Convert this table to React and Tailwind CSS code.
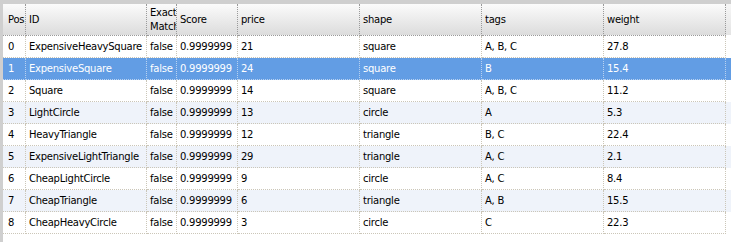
import React from 'react';

const columns = [
    { key: 'pos', label: 'Pos', w: 'w-[23px]', pad: 'pl-[5px]' },
    { key: 'id', label: 'ID', w: 'w-[121px]', pad: 'pl-[3px]' },
    { key: 'exact', label: 'Exact Match', w: 'w-[30px]', pad: 'pl-[3px]' },
    { key: 'score', label: 'Score', w: 'w-[61px]', pad: 'pl-[3px]' },
    { key: 'price', label: 'price', w: 'w-[122px]', pad: 'pl-[3px]' },
    { key: 'shape', label: 'shape', w: 'w-[122px]', pad: 'pl-[3px]' },
    { key: 'tags', label: 'tags', w: 'w-[122px]', pad: 'pl-[3px]' },
    { key: 'weight', label: 'weight', w: 'w-[122px]', pad: 'pl-[3px]' },
];

const rows = [
    ['0', 'ExpensiveHeavySquare', 'false', '0.9999999', '21', 'square', 'A, B, C', '27.8'],
    ['1', 'ExpensiveSquare', 'false', '0.9999999', '24', 'square', 'B', '15.4'],
    ['2', 'Square', 'false', '0.9999999', '14', 'square', 'A, B, C', '11.2'],
    ['3', 'LightCircle', 'false', '0.9999999', '13', 'circle', 'A', '5.3'],
    ['4', 'HeavyTriangle', 'false', '0.9999999', '12', 'triangle', 'B, C', '22.4'],
    ['5', 'ExpensiveLightTriangle', 'false', '0.9999999', '29', 'triangle', 'A, C', '2.1'],
    ['6', 'CheapLightCircle', 'false', '0.9999999', '9', 'circle', 'A, C', '8.4'],
    ['7', 'CheapTriangle', 'false', '0.9999999', '6', 'triangle', 'A, B', '15.5'],
    ['8', 'CheapHeavyCircle', 'false', '0.9999999', '3', 'circle', 'C', '22.3'],
];

const SELECTED = 1;

export default function App() {
    return (
        <div className="w-[731px] h-[242px] flex flex-col bg-white text-[10px] tracking-[-0.25px] text-black overflow-hidden" style={{ fontFamily: '"DejaVu Sans", Verdana, sans-serif' }}>
            <div className="h-[4px] bg-[#cfcfcf] shrink-0" />
            <div className="flex flex-1">
                <div className="w-[3px] bg-[#cfcfcf] shrink-0" />
                <div className="flex-1 flex flex-col">
                    {/* header */}
                    <div className="flex h-[32px] shrink-0">
                        {columns.map(col => (
                            <div key={col.key} className={`${col.w} ${col.pad} shrink-0 h-full overflow-hidden whitespace-nowrap flex items-center border-r border-b border-dotted border-[#9a9a9a] bg-gradient-to-b from-[#fbfbfb] to-[#dcdcdc]`}>
                                {col.key === 'exact' ? (
                                    <div className="leading-[14px]">Exact<br />Match</div>
                                ) : (
                                    <span>{col.label}</span>
                                )}
                            </div>
                        ))}
                        <div className="flex-1 h-[31px] bg-gradient-to-b from-[#f6f6f6] to-[#e4e4e4]" />
                    </div>
                    {/* rows */}
                    {rows.map((row, i) => {
                        const sel = i === SELECTED;
                        const bg = sel ? 'bg-[#629de4] text-white' : i % 2 === 1 ? 'bg-[#eff3fa]' : 'bg-white';
                        return (
                            <div key={i} className={`flex h-[22px] shrink-0 ${bg}`}>
                                {row.map((val, c) => (
                                    <div key={c} className={`${columns[c].w} ${columns[c].pad} shrink-0 h-full overflow-hidden whitespace-nowrap flex items-center border-r border-b border-dotted ${sel ? 'border-[#b9d2f0]' : 'border-[#cbc6b8]'}`}>
                                        {val}
                                    </div>
                                ))}
                                <div className="flex-1" />
                            </div>
                        );
                    })}
                </div>
            </div>
        </div>
    );
}
